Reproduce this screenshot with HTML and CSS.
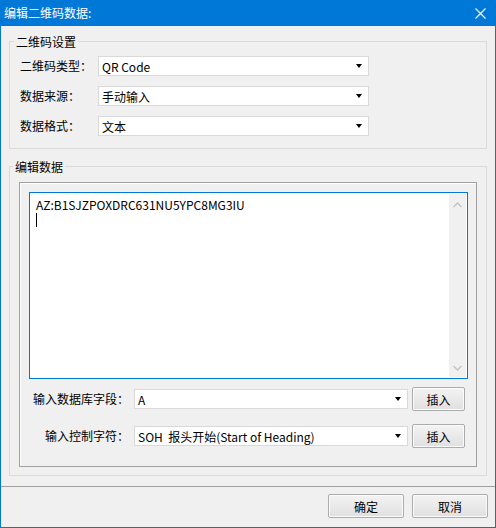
FILE: index.html
```html
<!DOCTYPE html>
<html lang="zh-CN">
<head>
    <meta charset="UTF-8">
    <title>编辑二维码数据</title>
    <link rel="stylesheet" href="styles.css">
</head>
<body>
    <div class="window">
        <div class="titlebar">
            <span class="title">编辑二维码数据:</span>
            <svg class="close" width="11" height="11" viewBox="0 0 11 11">
                <path d="M0.5 0.5 L10.5 10.5 M10.5 0.5 L0.5 10.5" stroke="#fff" stroke-width="1.1" fill="none"/>
            </svg>
        </div>

        <div class="content">
            <!-- 二维码设置 -->
            <div class="group group-settings">
                <span class="group-title">二维码设置</span>
                <div class="form-row">
                    <label class="label">二维码类型：</label>
                    <div class="combo combo-wide"><span>QR Code</span><i class="arrow"></i></div>
                </div>
                <div class="form-row">
                    <label class="label">数据来源：</label>
                    <div class="combo combo-wide"><span>手动输入</span><i class="arrow"></i></div>
                </div>
                <div class="form-row">
                    <label class="label">数据格式：</label>
                    <div class="combo combo-wide"><span>文本</span><i class="arrow"></i></div>
                </div>
            </div>

            <!-- 编辑数据 -->
            <div class="group group-data">
                <span class="group-title">编辑数据</span>
                <div class="panel">
                    <div class="editor">
                        <div class="editor-text">
                            <div>AZ:B1SJZPOXDRC631NU5YPC8MG3IU</div>
                            <div class="caret"></div>
                        </div>
                        <div class="scrollbar">
                            <svg width="9" height="6" viewBox="0 0 9 6"><path d="M0.5 5 L4.5 1 L8.5 5" stroke="#c4c4c4" stroke-width="1.4" fill="none"/></svg>
                            <svg width="9" height="6" viewBox="0 0 9 6"><path d="M0.5 1 L4.5 5 L8.5 1" stroke="#c4c4c4" stroke-width="1.4" fill="none"/></svg>
                        </div>
                    </div>
                    <div class="insert-row first">
                        <label class="label label-right">输入数据库字段：</label>
                        <div class="combo combo-insert"><span>A</span><i class="arrow"></i></div>
                        <button class="btn btn-insert">插入</button>
                    </div>
                    <div class="insert-row">
                        <label class="label label-right">输入控制字符：</label>
                        <div class="combo combo-insert"><span>SOH&nbsp; 报头开始(Start of Heading)</span><i class="arrow"></i></div>
                        <button class="btn btn-insert">插入</button>
                    </div>
                </div>
            </div>
        </div>

        <div class="footer">
            <button class="btn btn-dialog">确定</button>
            <button class="btn btn-dialog">取消</button>
        </div>
    </div>
</body>
</html>
```

FILE: styles.css
```css
* {
    margin: 0;
    padding: 0;
    box-sizing: border-box;
}

body {
    font-family: "Noto Sans CJK SC", "Noto Sans", sans-serif;
    font-size: 12px;
    color: #000;
    background: #fff;
}

.window {
    width: 496px;
    height: 528px;
    border: 1px solid #0078d7;
    border-top: none;
    background: #f0f0f0;
    display: flex;
    flex-direction: column;
}

.titlebar {
    height: 26px;
    background: #0078d7;
    color: #fff;
    display: flex;
    align-items: center;
    justify-content: space-between;
    padding: 0 9px 0 3px;
}

.title {
    line-height: 16px;
}

.content {
    padding: 15px 8px 0 8px;
}

.group {
    border: 1px solid #dadada;
}

.group-title {
    display: block;
    width: max-content;
    margin: -8px 0 0 -6px;
    padding: 0 2px;
    line-height: 16px;
    background: #f0f0f0;
}

.group-settings {
    padding: 0 10px 12px;
}

.group-data {
    margin-top: 17px;
    padding: 0 9px 8px;
}

.form-row {
    display: flex;
    align-items: center;
    height: 20px;
    margin-top: 10px;
}

.form-row:first-of-type {
    margin-top: 6px;
}

.label {
    width: 78px;
    line-height: 16px;
    white-space: nowrap;
}

.combo {
    height: 20px;
    border: 1px solid #d9d9d9;
    background: #fff;
    display: flex;
    align-items: center;
    justify-content: space-between;
    padding: 0 6px 0 3px;
    white-space: nowrap;
}

.combo-wide {
    width: 271px;
}

.arrow {
    width: 0;
    height: 0;
    border-left: 3px solid transparent;
    border-right: 3px solid transparent;
    border-top: 4px solid #000;
}

.panel {
    margin-top: 7px;
    border: 1px solid #a0a0a0;
    box-shadow: inset 1px 1px 0 #fff;
    padding: 9px 8px 18px 9px;
}

.editor {
    height: 187px;
    border: 1px solid #0078d7;
    background: #fff;
    padding: 1px;
    display: flex;
}

.editor-text {
    flex: 1;
    padding: 3px 5px;
    line-height: 16px;
}

.caret {
    width: 1px;
    height: 14px;
    margin-top: 0;
    background: #000;
}

.scrollbar {
    width: 17px;
    background: #f0f0f0;
    display: flex;
    flex-direction: column;
    align-items: center;
    justify-content: space-between;
    padding: 8px 0 6px;
}

.insert-row {
    display: flex;
    align-items: center;
    height: 24px;
    margin-top: 13px;
}

.insert-row.first {
    margin-top: 8px;
}

.label-right {
    width: 100px;
    text-align: right;
    margin-right: 5px;
}

.combo-insert {
    width: 274px;
    margin-right: 4px;
}

.btn {
    font-family: inherit;
    font-size: 12px;
    color: #000;
    height: 24px;
    border: 1px solid #acacac;
    border-radius: 2px;
    background: linear-gradient(#f3f3f3, #e0e0e0);
    box-shadow: inset 0 0 0 1px #fbfbfb;
}

.btn-insert {
    width: 53px;
}

.footer {
    margin-top: auto;
    height: 41px;
    border-top: 1px solid #a0a0a0;
    display: flex;
    justify-content: flex-end;
    gap: 8px;
    padding: 7px 7px 0 0;
}

.btn-dialog {
    width: 76px;
}
```
